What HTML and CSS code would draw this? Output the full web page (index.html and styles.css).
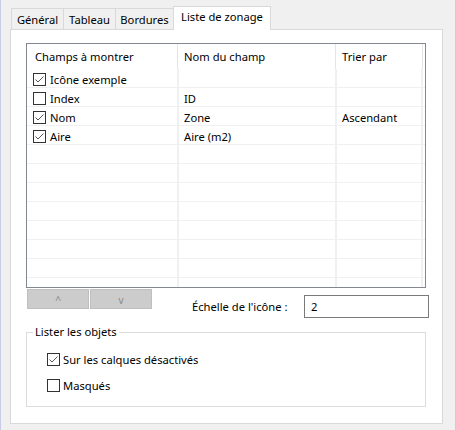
FILE: index.html
```html
<!DOCTYPE html>
<html lang="fr">
<head>
<meta charset="utf-8">
<title>Liste de zonage</title>
<link rel="stylesheet" href="styles.css">
</head>
<body>
<div class="window">
  <div class="tabs">
    <div class="tab t-general">Général</div>
    <div class="tab t-tableau">Tableau</div>
    <div class="tab t-bordures">Bordures</div>
    <div class="tab active">Liste de zonage</div>
  </div>
  <div class="panel">
    <div class="listview">
      <div class="lv-header">
        <div class="hc c1">Champs à montrer</div>
        <div class="hc c2">Nom du champ</div>
        <div class="hc c3">Trier par</div>
        <div class="hc c4"></div>
      </div>
      <div class="lv-body">
        <div class="row">
          <div class="cell c1"><span class="cb"><svg viewBox="0 0 11 11" width="11" height="11"><path d="M1.5 5.5 L4 8 L9.5 2.5" fill="none" stroke="#555" stroke-width="1"/></svg></span>Icône exemple</div>
          <div class="cell c2"></div>
          <div class="cell c3"></div>
          <div class="cell c4"></div>
        </div>
        <div class="row">
          <div class="cell c1"><span class="cb"></span>Index</div>
          <div class="cell c2">ID</div>
          <div class="cell c3"></div>
          <div class="cell c4"></div>
        </div>
        <div class="row">
          <div class="cell c1"><span class="cb"><svg viewBox="0 0 11 11" width="11" height="11"><path d="M1.5 5.5 L4 8 L9.5 2.5" fill="none" stroke="#555" stroke-width="1"/></svg></span>Nom</div>
          <div class="cell c2">Zone</div>
          <div class="cell c3">Ascendant</div>
          <div class="cell c4"></div>
        </div>
        <div class="row">
          <div class="cell c1"><span class="cb"><svg viewBox="0 0 11 11" width="11" height="11"><path d="M1.5 5.5 L4 8 L9.5 2.5" fill="none" stroke="#555" stroke-width="1"/></svg></span>Aire</div>
          <div class="cell c2">Aire (m2)</div>
          <div class="cell c3"></div>
          <div class="cell c4"></div>
        </div>
        <div class="row"><div class="cell c1"></div><div class="cell c2"></div><div class="cell c3"></div><div class="cell c4"></div></div>
        <div class="row"><div class="cell c1"></div><div class="cell c2"></div><div class="cell c3"></div><div class="cell c4"></div></div>
        <div class="row"><div class="cell c1"></div><div class="cell c2"></div><div class="cell c3"></div><div class="cell c4"></div></div>
        <div class="row"><div class="cell c1"></div><div class="cell c2"></div><div class="cell c3"></div><div class="cell c4"></div></div>
        <div class="row"><div class="cell c1"></div><div class="cell c2"></div><div class="cell c3"></div><div class="cell c4"></div></div>
        <div class="row"><div class="cell c1"></div><div class="cell c2"></div><div class="cell c3"></div><div class="cell c4"></div></div>
        <div class="row"><div class="cell c1"></div><div class="cell c2"></div><div class="cell c3"></div><div class="cell c4"></div></div>
        <div class="row"><div class="cell c1"></div><div class="cell c2"></div><div class="cell c3"></div><div class="cell c4"></div></div>
      </div>
    </div>
    <div class="controls">
      <div class="btn btn-up">^</div>
      <div class="btn btn-down">v</div>
      <div class="scale-label">Échelle de l'icône :</div>
      <div class="input">2</div>
    </div>
    <fieldset class="group">
      <legend>Lister les objets</legend>
      <div class="opt first"><span class="cb big"><svg viewBox="0 0 11 11" width="11" height="11"><path d="M1.5 5.5 L4 8 L9.5 2.5" fill="none" stroke="#555" stroke-width="1"/></svg></span><span>Sur les calques désactivés</span></div>
      <div class="opt second"><span class="cb big"></span><span>Masqués</span></div>
    </fieldset>
  </div>
</div>
</body>
</html>
```

FILE: styles.css
```css
html, body {
  margin: 0;
  padding: 0;
  background: #f0f0f0;
}

.window {
  width: 456px;
  height: 430px;
  box-sizing: border-box;
  background: #f0f0f0;
  border-left: 1px solid #c7cbe6;
  border-right: 1px solid #c7cbe6;
  padding-top: 6px;
  font-family: "Noto Sans", "Open Sans", sans-serif;
  font-size: 11.2px;
  color: #000;
  overflow: hidden;
}

/* Tabs */
.tabs {
  display: flex;
  align-items: flex-end;
  margin-left: 10px;
  height: 23px;
}

.tab {
  height: 21px;
  box-sizing: border-box;
  border-top: 1px solid #d9d9d9;
  border-left: 1px solid #d9d9d9;
  background: #f0f0f0;
  display: flex;
  align-items: center;
  justify-content: center;
  white-space: nowrap;
}

.t-general { width: 52px; }
.t-tableau { width: 52px; }
.t-bordures { width: 58px; }

.tab.active {
  width: 98px;
  height: 24px;
  margin-bottom: -1px;
  border-right: 1px solid #d9d9d9;
  background: #fff;
  padding-bottom: 4px;
  position: relative;
  z-index: 1;
}

/* Panel */
.panel {
  margin-left: 9px;
  width: 433px;
  height: 395px;
  box-sizing: border-box;
  border: 1px solid #d9d9d9;
  background: #fff;
  padding: 13px 0 0 15px;
}

/* List view */
.listview {
  width: 400px;
  height: 245px;
  box-sizing: border-box;
  border: 1px solid #828790;
  overflow: hidden;
  background: #fff;
}

.lv-header {
  display: flex;
  height: 25px;
}

.hc {
  box-sizing: border-box;
  border-right: 1px solid #e5e5e5;
  display: flex;
  align-items: center;
  white-space: nowrap;
}

.hc.c1 { width: 151px; padding-left: 8px; }
.hc.c2 { width: 158px; padding-left: 6px; }
.hc.c3 { width: 87px; padding-left: 6px; }
.hc.c4 { width: 2px; border-right: none; }

.lv-body {
  height: 218px;
  overflow: hidden;
}

.row {
  display: flex;
  height: 19px;
  box-sizing: border-box;
  border-bottom: 1px solid #f0f0f0;
}

.cell {
  box-sizing: border-box;
  border-right: 2px solid #eff0f4;
  display: flex;
  align-items: center;
  padding-top: 2px;
  white-space: nowrap;
}

.cell.c1 { width: 152px; padding-left: 6px; }
.cell.c2 { width: 158px; padding-left: 5px; }
.cell.c3 { width: 86px; padding-left: 5px; }
.cell.c4 { width: 2px; border-right: none; }

.cb {
  width: 13px;
  height: 13px;
  box-sizing: border-box;
  border: 1px solid #333;
  background: #fff;
  margin-right: 4px;
  display: flex;
  align-items: center;
  justify-content: center;
  flex: none;
}

.cb svg { display: block; }

/* Controls under list */
.controls {
  display: flex;
  align-items: flex-start;
  margin-top: 1px;
}

.btn {
  width: 62px;
  height: 20px;
  box-sizing: border-box;
  background: #cccccc;
  border: 1px solid #bfbfbf;
  color: #8a8a8a;
  font-size: 10px;
  display: flex;
  align-items: center;
  justify-content: center;
}

.btn-up { margin-left: 1px; padding-top: 2px; }
.btn-down { margin-left: 1px; padding-top: 1px; }

.scale-label {
  margin-left: 40px;
  margin-top: 6px;
  width: 112px;
  height: 23px;
  display: flex;
  align-items: center;
  white-space: nowrap;
}

.input {
  margin-top: 6px;
  width: 125px;
  height: 23px;
  box-sizing: border-box;
  border: 1px solid #7a7a7a;
  padding-left: 6px;
  display: flex;
  align-items: center;
  background: #fff;
}

/* Group box */
.group {
  margin: 6px 0 0 0;
  width: 400px;
  box-sizing: border-box;
  border: 1px solid #dcdcdc;
  padding: 0 0 12px 6px;
  min-width: 0;
}

.group legend {
  padding: 0 2px;
  line-height: 16px;
}

.opt {
  display: flex;
  align-items: center;
  height: 17px;
  margin-left: 14px;
}

.opt .cb { margin-right: 3px; }

.opt.first { margin-top: 11px; }
.opt.second { margin-top: 9px; }
```
